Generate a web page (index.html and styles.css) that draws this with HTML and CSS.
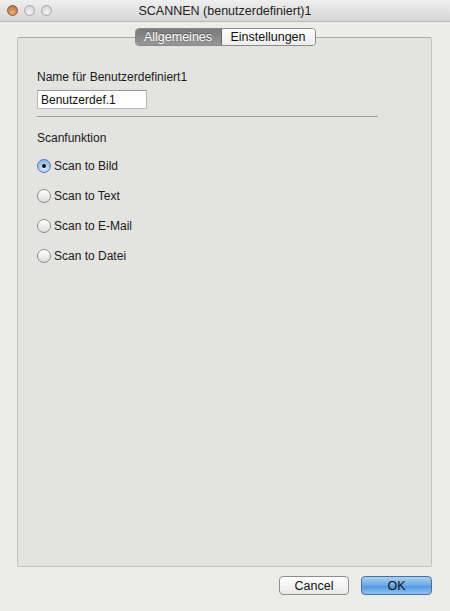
FILE: index.html
```html
<!DOCTYPE html>
<html lang="de">
<head>
    <meta charset="UTF-8">
    <meta name="viewport" content="width=device-width, initial-scale=1.0">
    <title>SCANNEN (benutzerdefiniert)1</title>
    <link rel="stylesheet" href="styles.css">
</head>
<body>
    <div class="window">
        <div class="titlebar">
            <div class="lights">
                <span class="light close"></span>
                <span class="light"></span>
                <span class="light"></span>
            </div>
            <div class="title">SCANNEN (benutzerdefiniert)1</div>
        </div>

        <div class="content">
            <div class="tabs">
                <div class="tab active">Allgemeines</div>
                <div class="tab">Einstellungen</div>
            </div>

            <div class="panel">
                <label class="field-label" for="name">Name für Benutzerdefiniert1</label>
                <input class="name-input" type="text" id="name" value="Benutzerdef.1">
                <div class="separator"></div>

                <div class="section-label">Scanfunktion</div>
                <div class="radio-list">
                    <div class="radio-row"><span class="radio checked"></span>Scan to Bild</div>
                    <div class="radio-row"><span class="radio"></span>Scan to Text</div>
                    <div class="radio-row"><span class="radio"></span>Scan to E-Mail</div>
                    <div class="radio-row"><span class="radio"></span>Scan to Datei</div>
                </div>
            </div>

            <div class="buttons">
                <button class="button">Cancel</button>
                <button class="button default">OK</button>
            </div>
        </div>
    </div>
</body>
</html>
```

FILE: styles.css
```css
body {
    margin: 0;
    font-family: "Liberation Sans", Arial, sans-serif;
    font-size: 12px;
    color: #1a1a1a;
    background-color: #ecece9;
}
.window {
    width: 450px;
    height: 611px;
    display: flex;
    flex-direction: column;
    background-color: #ecece9;
}
.titlebar {
    height: 22px;
    display: flex;
    align-items: center;
    background: linear-gradient(#efefef, #d6d6d6);
    border-bottom: 1px solid #b8b8b8;
    box-sizing: border-box;
}
.lights {
    display: flex;
    gap: 6px;
    padding-left: 7px;
    width: 60px;
    box-sizing: border-box;
}
.light {
    width: 11px;
    height: 11px;
    border-radius: 50%;
    box-sizing: border-box;
    border: 1px solid #a8a8a8;
    background: radial-gradient(circle at 50% 70%, #f4f4f4, #cbcbcb);
}
.light.close {
    border-color: #8e5a38;
    background: radial-gradient(circle at 50% 70%, #f0b27c, #b6622b);
}
.title {
    flex: 1;
    text-align: center;
    margin-right: 60px;
    font-size: 12.5px;
    color: #222;
}
.content {
    flex: 1;
    display: flex;
    flex-direction: column;
    padding: 6px 18px 0 17px;
}
.tabs {
    align-self: center;
    display: flex;
    height: 18px;
    margin-left: 1px;
    position: relative;
    z-index: 1;
    border: 1px solid #8a8a8a;
    border-radius: 4px;
    overflow: hidden;
    box-sizing: border-box;
}
.tab {
    width: 93px;
    display: flex;
    align-items: center;
    justify-content: center;
    font-size: 12.5px;
    background: linear-gradient(#ffffff, #ececec);
    color: #111;
}
.tab.active {
    width: 85px;
    background: linear-gradient(#7a7a7a, #979797);
    color: #fff;
    text-shadow: 0 -1px 0 #555;
    border-right: 1px solid #666;
}
.panel {
    margin-top: -9px;
    height: 530px;
    box-sizing: border-box;
    background-color: #e3e3e0;
    border: 1px solid #c4c4c2;
    border-top-color: #a9a9a7;
    border-radius: 2px;
    padding: 32px 0 0 19px;
    display: flex;
    flex-direction: column;
    align-items: flex-start;
}
.field-label {
    line-height: 15px;
}
.name-input {
    margin-top: 5px;
    width: 110px;
    height: 19px;
    box-sizing: border-box;
    border: 1px solid #b8b8b8;
    border-top-color: #9c9c9c;
    background: #fff;
    padding: 0 3px;
    font-family: inherit;
    font-size: 12px;
    color: #111;
}
.separator {
    margin-top: 7px;
    width: 341px;
    height: 1px;
    background-color: #9d9d9b;
}
.section-label {
    margin-top: 14px;
    line-height: 15px;
}
.radio-list {
    margin-top: 12px;
    display: flex;
    flex-direction: column;
    gap: 14px;
}
.radio-row {
    height: 16px;
    display: flex;
    align-items: center;
    gap: 3px;
}
.radio {
    width: 14px;
    height: 14px;
    border-radius: 50%;
    box-sizing: border-box;
    border: 1px solid #8d8d8d;
    background: linear-gradient(#ffffff, #dcdcdc);
    display: flex;
    align-items: center;
    justify-content: center;
}
.radio.checked {
    border-color: #5a7fa8;
    background: radial-gradient(circle at 50% 65%, #dcefff, #8dbbec 70%, #6a9dd6);
}
.radio.checked::after {
    content: "";
    width: 4px;
    height: 4px;
    border-radius: 50%;
    background-color: #111;
}
.buttons {
    display: flex;
    justify-content: flex-end;
    gap: 12px;
    margin-top: 9px;
}
.button {
    height: 19px;
    border-radius: 4px;
    font-family: inherit;
    font-size: 12.5px;
    color: #111;
    padding: 0;
    border: 1px solid #8e8e8e;
    background: linear-gradient(#ffffff, #e9e9e9);
    width: 70px;
}
.button.default {
    width: 71px;
    border-color: #4a6fa0;
    background: linear-gradient(#a9d1f5, #6aa8e6 50%, #4f94de 51%, #8cc4f3);
}
```
